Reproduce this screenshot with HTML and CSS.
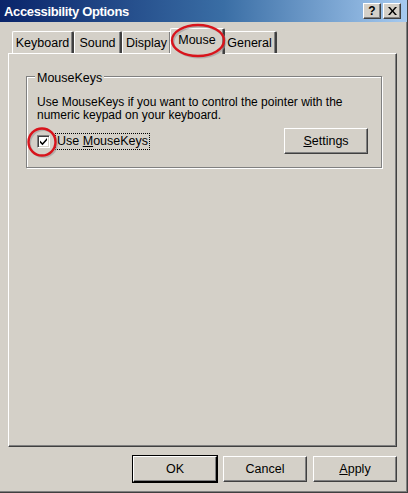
FILE: index.html
```html
<!DOCTYPE html>
<html>
<head>
<meta charset="utf-8">
<link rel="stylesheet" href="styles.css">
</head>
<body>
<div class="window">
  <div class="titlebar">
    <span class="title">Accessibility Options</span>
    <div class="tb-buttons">
      <span class="tb-btn">?</span>
      <span class="tb-btn x">
        <svg width="9" height="8" viewBox="0 0 9 8"><path d="M0 0h2l2.5 3 2.5-3h2l-3.5 4 3.5 4h-2l-2.5-3-2.5 3h-2l3.5-4z" fill="#000"/></svg>
      </span>
    </div>
  </div>
  <div class="client">
    <div class="tabs">
      <div class="tab t-keyboard">Keyboard</div>
      <div class="tab t-sound">Sound</div>
      <div class="tab t-display">Display</div>
      <div class="tab active">Mouse</div>
      <div class="tab t-general">General</div>
    </div>
    <div class="panel">
      <div class="group">
        <span class="legend">MouseKeys</span>
        <p class="desc">Use MouseKeys if you want to control the pointer with the numeric keypad on your keyboard.</p>
        <div class="row">
          <label class="check">
            <span class="box">
              <svg width="9" height="9" viewBox="0 0 9 9"><path d="M1 3.5l2.5 2.5 4.5-5v2.2l-4.5 5-2.5-2.5z" fill="#000"/></svg>
            </span>
            <span class="focus">Use <u>M</u>ouseKeys</span>
          </label>
          <button class="btn settings"><u>S</u>ettings</button>
        </div>
      </div>
    </div>
    <div class="footer">
      <button class="btn default">OK</button>
      <button class="btn">Cancel</button>
      <button class="btn"><u>A</u>pply</button>
    </div>
  </div>
  <svg class="marks" width="408" height="493" viewBox="0 0 408 493">
    <ellipse cx="199.5" cy="42" rx="26" ry="15.5" fill="none" stroke="#9a9a9a" stroke-width="2" opacity="0.6"/>
    <ellipse cx="198" cy="40.5" rx="26" ry="15.5" fill="none" stroke="#d8141c" stroke-width="2.4"/>
    <circle cx="43.5" cy="143.5" r="13.5" fill="none" stroke="#9a9a9a" stroke-width="2" opacity="0.6"/>
    <circle cx="42" cy="142" r="13.5" fill="none" stroke="#d8141c" stroke-width="2.4"/>
  </svg>
</div>
</body>
</html>
```

FILE: styles.css
```css
* { box-sizing: border-box; }
html, body { margin: 0; padding: 0; }
body {
  width: 408px;
  height: 493px;
  overflow: hidden;
  background: #d4d0c8;
  font-family: "Liberation Sans", Arial, sans-serif;
  font-size: 12px;
  color: #000;
}
.window {
  position: relative;
  width: 408px;
  height: 493px;
  background: #d4d0c8;
  border-right: 1px solid #404040;
  border-bottom: 1px solid #404040;
  box-shadow: inset -1px -1px 0 #808080;
  display: flex;
  flex-direction: column;
}
.titlebar {
  height: 22px;
  background: linear-gradient(to right, #0a246a 0%, #3a6ea5 55%, #a6caf0 100%);
  display: flex;
  align-items: center;
  justify-content: space-between;
  padding: 0 4px 0 4px;
}
.title {
  color: #fff;
  font-weight: bold;
  font-size: 13px;
  letter-spacing: -0.35px;
}
.tb-buttons { display: flex; gap: 2px; margin-right: 2px; }
.tb-btn {
  width: 18px;
  height: 16px;
  background: #d4d0c8;
  border: 1px solid;
  border-color: #fff #404040 #404040 #fff;
  box-shadow: inset -1px -1px 0 #808080;
  display: flex;
  align-items: center;
  justify-content: center;
  font-weight: bold;
  font-size: 12px;
  line-height: 1;
}
.client {
  flex: 1;
  padding: 5px 10px 10px 8px;
  display: flex;
  flex-direction: column;
}
.tabs {
  display: flex;
  align-items: flex-end;
  height: 26px;
  padding-left: 4px;
  position: relative;
  z-index: 1;
}
.tab {
  height: 22px;
  padding-top: 3px;
  text-align: center;
  border-top: 1px solid #fff;
  border-left: 1px solid #fff;
  border-right: 2px solid #404040;
  border-radius: 2px 2px 0 0;
  box-shadow: inset -1px 0 0 #808080;
  font-size: 12.5px;
  line-height: 16px;
}
.t-keyboard { width: 62px; }
.t-sound { width: 48px; }
.t-display { width: 50px; }
.t-general { width: 54px; }
.tab.active {
  width: 55px;
  height: 26px;
  margin-left: -2px;
  margin-right: -2px;
  padding-top: 3px;
  background: #d4d0c8;
  margin-bottom: -1px;
  position: relative;
  z-index: 2;
}
.panel {
  flex: 1;
  border: 1px solid;
  border-color: #fff #404040 #404040 #fff;
  box-shadow: inset -1px -1px 0 #808080;
  padding: 22px 14px 0 17px;
}
.group {
  position: relative;
  height: 92px;
  border: 1px solid #808080;
  box-shadow: inset 1px 1px 0 #fff, 1px 1px 0 #fff;
  padding: 19px 0 0 10px;
}
.legend {
  position: absolute;
  top: -6px;
  left: 8px;
  padding: 0 2px;
  background: #d4d0c8;
  font-size: 12.5px;
  line-height: 14px;
}
.desc {
  margin: 0;
  font-size: 12px;
  line-height: 13px;
  width: 320px;
}
.row {
  display: flex;
  align-items: center;
  justify-content: space-between;
  margin-top: 6px;
  padding-right: 13px;
}
.check { display: flex; align-items: center; gap: 6px; font-size: 12.5px; }
.box {
  width: 13px;
  height: 13px;
  background: #fff;
  border: 1px solid;
  border-color: #808080 #fff #fff #808080;
  box-shadow: inset 1px 1px 0 #404040, inset -1px -1px 0 #d4d0c8;
  display: flex;
  align-items: center;
  justify-content: center;
}
.focus {
  outline: 1px dotted #000;
  padding: 0 1px;
  line-height: 15px;
}
.btn {
  font-family: inherit;
  font-size: 12.5px;
  color: #000;
  background: #d4d0c8;
  border: 1px solid;
  border-color: #fff #404040 #404040 #fff;
  box-shadow: inset -1px -1px 0 #808080;
  padding: 0;
  margin: 0;
  border-radius: 0;
}
.settings { width: 84px; height: 26px; }
.footer {
  display: flex;
  justify-content: flex-end;
  gap: 6px;
  padding-top: 9px;
}
.footer .btn { width: 84px; height: 26px; }
.btn.default {
  outline: 1px solid #000;
  outline-offset: 0;
  border-color: #fff #000 #000 #fff;
}
.marks {
  position: absolute;
  left: 0;
  top: 0;
  z-index: 10;
  pointer-events: none;
}
```
